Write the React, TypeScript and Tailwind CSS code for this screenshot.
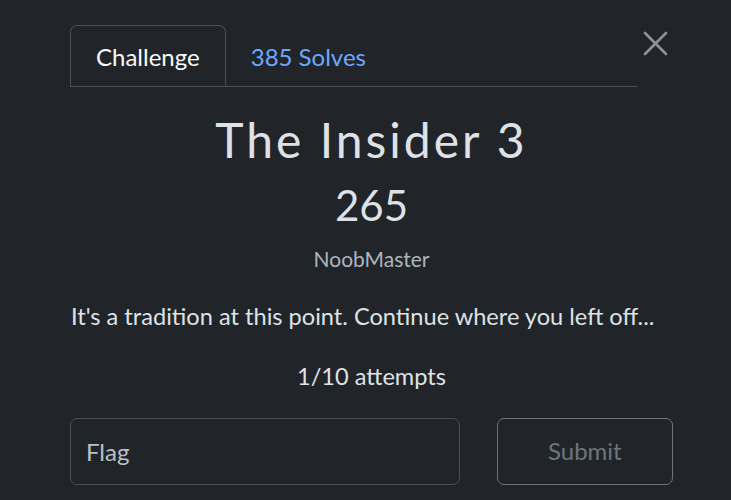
import React, { useState } from "react";

export default function App() {
  const [flag, setFlag] = useState("");

  return (
    <div
      className="w-[731px] h-[500px] overflow-hidden bg-[#212529] text-[#dee2e6] pl-[70px] pr-[58px]"
      style={{ fontFamily: "Lato, 'Open Sans', sans-serif" }}
    >
      <div className="flex items-start pt-[25px]">
        <div className="w-[568px] flex border-b border-[#495057]">
          <div className="h-[61px] px-[25px] pt-[2px] flex items-center border border-b-0 border-[#495057] rounded-t-[7px] -mb-px bg-[#212529] text-[24px] text-[#f8f9fa]">
            Challenge
          </div>
          <div className="h-[61px] px-[25px] pt-[2px] flex items-center text-[24px] text-[#6ea8fe]">
            385 Solves
          </div>
        </div>
        <button className="ml-[5px] mt-[6px] w-[25px] h-[25px] text-[#8f9194]">
          <svg viewBox="0 0 25 25" width="25" height="25" fill="none" stroke="currentColor" strokeWidth="2.6" strokeLinecap="round">
            <path d="M2 2 L23 23 M23 2 L2 23" />
          </svg>
        </button>
      </div>

      <div className="flex flex-col items-center text-center">
        <h2 className="mt-[24px] text-[48px] leading-[1.2] tracking-[3px] text-[#dee2e6]">
          The Insider 3
        </h2>
        <h3 className="mt-[11px] text-[42px] leading-[1.2] text-[#dee2e6]">265</h3>
        <p className="mt-[16px] text-[21px] leading-[1.2] text-[#adb5bd]">NoobMaster</p>
        <p className="mt-[31px] self-stretch text-left pl-px text-[23.6px] leading-[1.2] text-[#dee2e6]">
          It's a tradition at this point. Continue where you left off...
        </p>
        <p className="mt-[32px] text-[23.6px] leading-[1.2] text-[#dee2e6]">1/10 attempts</p>
      </div>

      <div className="mt-[27px] flex gap-[37px]">
        <input
          value={flag}
          onChange={(e) => setFlag(e.target.value)}
          placeholder="Flag"
          className="w-[391px] h-[67px] rounded-[7px] border border-[#495057] bg-[#212529] px-[15px] text-[24px] text-[#dee2e6] placeholder:text-[#b9c0c7] outline-none"
          style={{ fontFamily: "Lato, 'Open Sans', sans-serif" }}
        />
        <button
          disabled
          className="w-[177px] h-[67px] rounded-[7px] border border-[#6c757d] text-[24px] text-[#6c757d]"
        >
          Submit
        </button>
      </div>
    </div>
  );
}
